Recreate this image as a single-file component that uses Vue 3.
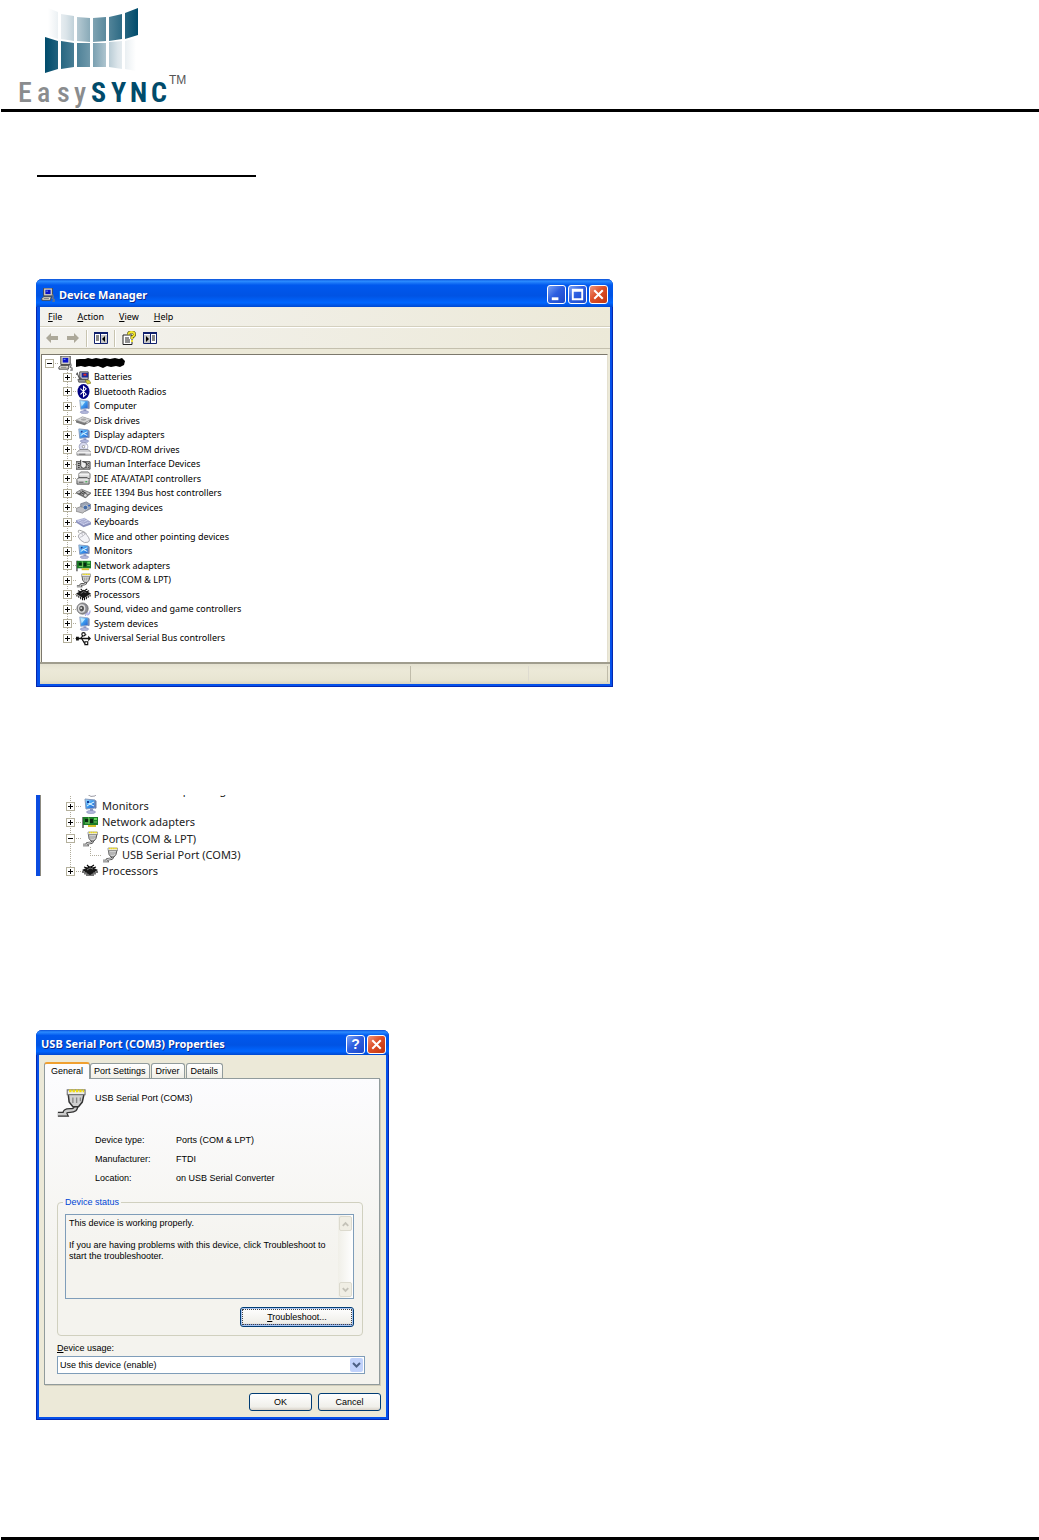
<!-- App.vue: driver installation page with the Device Manager and port properties windows -->
<template>
  <div class="page">
    <svg class="sprites" width="0" height="0" aria-hidden="true">
      <defs>
        <linearGradient id="screen" x1="0" y1="0" x2="1" y2="1">
          <stop offset="0" stop-color="#9fe0ff" />
          <stop offset="0.5" stop-color="#3c9cf0" />
          <stop offset="1" stop-color="#2457c8" />
        </linearGradient>
      </defs>
      <symbol id="i-pc" viewBox="0 0 16 16">
        <path d="M3 0h10v9H3z" fill="#d8d4c8" stroke="#404040" />
        <path d="M5 2h6v5H5z" fill="#0a12c8" />
        <path d="M6 3h2v1H6z" fill="#7fb4ff" />
        <path d="M1 12l2-2h9l-1 2v2H1z" fill="#e4e0d4" stroke="#404040" />
        <path d="M3 12h6" stroke="#777" />
        <path d="M13 7l1 3-1 2 2 1v2h-2" fill="none" stroke="#777" stroke-width="1.4" />
      </symbol>
      <symbol id="i-battery" viewBox="0 0 16 16">
        <path d="M4 2h9v8H4z" fill="#c8c8d0" stroke="#444" />
        <path d="M6 3h7v5H6z" fill="#1a2a9a" />
        <path d="M8 4h3v2H8z" fill="#e02828" />
        <path d="M1 3l4 9M0 5l2-2M4 8l5 5" stroke="#555" stroke-width="1.2" />
        <path d="M2 10h8l1 3H3z" fill="#999" stroke="#444" stroke-width=".8" />
        <path d="M10 11h4l2 3-4 1z" fill="#d8cf3a" stroke="#777018" stroke-width=".6" />
      </symbol>
      <symbol id="i-bluetooth" viewBox="0 0 16 16">
        <ellipse cx="8" cy="8" rx="6.4" ry="8" fill="#000080" />
        <path d="M4.7 5l6.2 5.8L8 13.5v-11L10.9 5.2 4.7 11" fill="none" stroke="#fff" stroke-width="1.1" />
      </symbol>
      <symbol id="i-monitor" viewBox="0 0 16 16">
        <path d="M4 1l9 1v8l-8 1z" fill="url(#screen)" stroke="#9cabc8" />
        <path d="M13 2l1.5 1v7L13 11z" fill="#6c7fa8" />
        <path d="M5 2.5l5 .5-4 5z" fill="#d5f4ff" opacity=".8" />
        <path d="M8 11h3v2H8z" fill="#8c94c0" />
        <ellipse cx="9" cy="14" rx="4.5" ry="1.5" fill="#b4b9dc" stroke="#7f86b4" stroke-width=".6" />
      </symbol>
      <symbol id="i-display" viewBox="0 0 16 16">
        <path d="M3 1l10 1v8l-9 1z" fill="url(#screen)" stroke="#8499bd" />
        <path d="M13 2l1.5 1v7L13 11z" fill="#6c7fa8" />
        <path d="M5 4l3 2 4-2M5 8l3-2 4 2" stroke="#e8fbff" fill="none" />
        <path d="M5 3h2v2H5z" fill="#123a9a" />
        <path d="M8 11h3v2H8z" fill="#8c94c0" />
        <ellipse cx="9" cy="14" rx="4.5" ry="1.5" fill="#b4b9dc" stroke="#7f86b4" stroke-width=".6" />
      </symbol>
      <symbol id="i-disk" viewBox="0 0 16 16">
        <path d="M0 8l7-4 9 3v2l-7 4-9-3z" fill="#777" />
        <path d="M0 7.5l7-3.5 9 3-7 3.5z" fill="#d8d8d8" stroke="#999" stroke-width=".6" />
        <ellipse cx="8" cy="7" rx="3" ry="1.2" fill="#a8a8a8" />
        <path d="M11 10.5l3-1.5" stroke="#eee" />
      </symbol>
      <symbol id="i-cdrom" viewBox="0 0 16 16">
        <circle cx="8" cy="5" r="4.6" fill="#d8daee" stroke="#8c90b0" stroke-width=".8" />
        <path d="M8 5l4-2v4z" fill="#fff" />
        <circle cx="8" cy="5" r="1.3" fill="#fff" stroke="#777" stroke-width=".7" />
        <path d="M1 11l3-3h9l3 3v3H1z" fill="#d0d0d4" stroke="#777" stroke-width=".8" />
        <path d="M1 11.5h15" stroke="#fff" />
        <path d="M3 13h7" stroke="#666" />
      </symbol>
      <symbol id="i-hid" viewBox="0 0 16 16">
        <path d="M0 5h15v8H0z" fill="#b8b8b8" stroke="#444" />
        <path d="M2 7h2M2 9h2M2 11h2M11 7h1M13 7h1M11 11h1M13 11h1" stroke="#222" />
        <path d="M5 3v6q0 3 3 3t3-3V6L7 5" fill="#eee" stroke="#333" />
        <path d="M10 6l4 4" stroke="#444" />
      </symbol>
      <symbol id="i-ide" viewBox="0 0 16 16">
        <path d="M3 3l2-2h8l2 2v5H3z" fill="#d8d8d8" stroke="#555" stroke-width=".8" />
        <path d="M3 4h11" stroke="#fff" />
        <path d="M1 9l2-2h9l2 2v5H1z" fill="#c8c8c8" stroke="#444" stroke-width=".9" />
        <path d="M1.5 9.5h12" stroke="#fff" />
        <path d="M3 12h5" stroke="#555" />
        <path d="M10 11h2v1h-2z" fill="#18a830" />
      </symbol>
      <symbol id="i-1394" viewBox="0 0 16 16">
        <path d="M0 8l6-4 10 4-6 5z" fill="#777" />
        <path d="M0 7l6-3.5 10 4-6 3.5z" fill="#c4c4c4" stroke="#555" stroke-width=".7" />
        <path d="M4 6l5 3M6 5l5 3M3 9l3-2" stroke="#444" stroke-width="1.1" />
        <circle cx="10" cy="10" r="2" fill="#ddd" stroke="#444" stroke-width=".7" />
      </symbol>
      <symbol id="i-imaging" viewBox="0 0 16 16">
        <path d="M5 4l6-2 5 3v4l-6 3-5-3z" fill="#9ca4b4" stroke="#666e80" stroke-width=".7" />
        <path d="M0 9l5-2 7 3-5 4-7-2z" fill="#c0c0c4" stroke="#777" stroke-width=".7" />
        <circle cx="10" cy="8" r="2.5" fill="#456da8" stroke="#ddd" stroke-width=".7" />
        <path d="M13 6h2" stroke="#2d62c0" stroke-width="1.5" />
      </symbol>
      <symbol id="i-keyboard" viewBox="0 0 16 16">
        <path d="M0 6l9-2 7 4v2l-8 3-8-5z" fill="#8b91bd" />
        <path d="M0 6l9-2.5L16 8l-8 3z" fill="#d4d8f2" stroke="#8b91bd" stroke-width=".6" />
        <path d="M3 6.5l7 3M5 5.7l7 3M7 5l7 3M3 7.5l8-3M6 9l8-2.5" stroke="#878cb8" stroke-width=".5" />
      </symbol>
      <symbol id="i-mouse" viewBox="0 0 16 16">
        <path d="M3 4Q1 0 6 2t5 3" fill="none" stroke="#999" />
        <path d="M3 6q5-5 9 1 4 5 1 7-4 2-8-2T3 6z" fill="#f4f4f8" stroke="#9a9aa2" stroke-width=".9" />
        <path d="M4 9q4-1 6-4M7 7L6 4" fill="none" stroke="#a8a8b0" stroke-width=".7" />
      </symbol>
      <symbol id="i-network" viewBox="0 0 16 16">
        <path d="M1 3v11" stroke="#555" stroke-width="1.5" />
        <path d="M1 3h15v8H1z" fill="#1c7c28" />
        <path d="M3 5h3v3H3zM8 5h3v4H8z" fill="#082c10" />
        <path d="M12 4h3v2h-3z" fill="#64d85c" />
        <path d="M6 4h1v6M12 8h3M3 9h4" stroke="#78c860" fill="none" />
        <path d="M6 11h8v2H6z" fill="#d4c02c" />
      </symbol>
      <symbol id="i-port" viewBox="0 0 16 16">
        <path d="M10.5 9.5Q11 12 7.5 12T5 14H1" fill="none" stroke="#333" stroke-width="2.6" />
        <path d="M10.5 9.5Q11 12 7.5 12T5 14H1" fill="none" stroke="#ccc" stroke-width="1.3" />
        <path d="M6.5 3H15l-1 4.5-2 2.5H9L7 7.5z" fill="#d0d0d0" stroke="#333" stroke-width=".8" />
        <path d="M6 1h9.5v2.5H6z" fill="#eee" stroke="#777" stroke-width=".6" />
        <path d="M7 1.5h8" stroke="#f0dc10" stroke-width="1.5" stroke-dasharray="1.3 .5" />
        <path d="M9 5v3M11 5v3M13 5v2" stroke="#888" stroke-width=".7" />
      </symbol>
      <symbol id="i-cpu" viewBox="0 0 16 16">
        <path d="M0 7l8-4 8 4-8 5z" fill="#181818" />
        <path d="M1 8v2M3 9v2.500M5 10v3M7 11v3M9 11v3M11 10v3M13 9v2.500M15 8v2M2 4l3 1M12 2l-3 2M5 2l2 2M14 4l-3 1" stroke="#000" stroke-width="1.1" />
        <path d="M5 7l3-2 3 1" fill="none" stroke="#888" stroke-width=".8" />
      </symbol>
      <symbol id="i-sound" viewBox="0 0 16 16">
        <ellipse cx="7" cy="7" rx="6" ry="6" fill="#8e8e94" stroke="#666" stroke-width=".8" />
        <ellipse cx="6" cy="7" rx="4" ry="4.5" fill="#ddd" />
        <ellipse cx="6" cy="7" rx="2.5" ry="3" fill="#555" />
        <circle cx="5.5" cy="6.5" r="1" fill="#eee" />
        <path d="M12 14q3-1 3-5M10 15q0-2 3-4" stroke="#a8a8e0" fill="none" stroke-width="1.2" />
      </symbol>
      <symbol id="i-usb" viewBox="0 0 16 16">
        <path d="M2 8h12" stroke="#111" stroke-width="1.6" />
        <path d="M0 6h3v4H0zM13 5l3 3-3 3z" fill="#111" />
        <path d="M5 8l3-4h3M6 8l3 5h2" fill="none" stroke="#111" stroke-width="1.3" />
        <circle cx="8" cy="3.5" r="1.8" fill="#fff" stroke="#111" stroke-width="1.2" />
        <path d="M9.5 11.5h3v3h-3z" fill="#fff" stroke="#111" stroke-width="1.2" />
      </symbol>
    </svg>

    <header class="brand">
      <svg class="logo" viewBox="0 0 190 109" width="190" height="109" role="img" aria-label="EasySYNC">
        <defs>
          <linearGradient id="top" gradientUnits="userSpaceOnUse" x1="48" x2="138" y1="0" y2="0">
            <stop offset="0" stop-color="#fff" />
            <stop offset=".2" stop-color="#dce5ea" />
            <stop offset=".5" stop-color="#7fa3b2" />
            <stop offset="1" stop-color="#004b6b" />
          </linearGradient>
          <linearGradient id="bottom" gradientUnits="userSpaceOnUse" x1="45" x2="136" y1="0" y2="0">
            <stop offset="0" stop-color="#004b6b" />
            <stop offset=".5" stop-color="#7099ab" />
            <stop offset=".8" stop-color="#dce5ea" />
            <stop offset="1" stop-color="#fff" />
          </linearGradient>
        </defs>
        <path fill="url(#top)" d="M48 8L58 12V39L48 36zM61 14L74 16V41L61 39zM77 17L90 18V42L77 41zM93 18L106 17V41L93 42zM109 17L122 14V39L109 41zM125 13L138 8V35L125 39z" />
        <path fill="url(#bottom)" d="M45 37L58 41V69L45 73zM61 41L74 43V67L61 69zM77 43L90 43V67L77 67zM93 43L106 43V67L93 67zM109 42L122 41V69L109 67zM125 41L136 38V71L125 69z" />
        <text class="easy" x="18 37 57 74" y="102">Easy</text>
        <text class="sync" x="91 111 130 151" y="102">SYNC</text>
        <text class="tm" x="169" y="84">TM</text>
      </svg>
    </header>

    <main class="content">
      <hr class="heading-rule" />

      <section class="window manager">
        <div class="titlebar">
          <svg class="title-icon"><use href="#i-pc" /></svg>
          <h2>Device Manager</h2>
          <button class="caption" type="button" aria-label="Minimize">
            <svg viewBox="0 0 18 18"><path d="M4 12h7v3H4z" fill="#fff" /></svg>
          </button>
          <button class="caption" type="button" aria-label="Maximize">
            <svg viewBox="0 0 18 18"><path d="M3 3h12v12H3zM5 6v7h8V6z" fill="#fff" fill-rule="evenodd" /></svg>
          </button>
          <button class="caption close" type="button" aria-label="Close">
            <svg viewBox="0 0 18 18"><path d="M4.5 4.5l9 9M13.5 4.5l-9 9" stroke="#fff" stroke-width="2.2" /></svg>
          </button>
        </div>
        <div class="manager-body">
          <nav class="menubar">
            <button v-for="item in menus" :key="item" type="button"><u>{{ item[0] }}</u>{{ item.slice(1) }}</button>
          </nav>
          <div class="toolbar">
            <button type="button" aria-label="Back" disabled>
              <svg viewBox="0 0 14 14"><path d="M1 7l5-5v3h7v4H6v3z" fill="#aca899" /></svg>
            </button>
            <button type="button" aria-label="Forward" disabled>
              <svg viewBox="0 0 14 14"><path d="M13 7L8 2v3H1v4h7v3z" fill="#aca899" /></svg>
            </button>
            <span class="divider"></span>
            <button type="button" aria-label="Show console tree">
              <svg viewBox="0 0 14 14">
                <path d="M.5 1.5h13v11H.5z" fill="#fff" stroke="#10206c" />
                <path d="M0 1h14v2H0zM6 3h1v10H6z" fill="#10206c" />
                <path d="M7 4h6v8H7z" fill="#c8c8c8" />
                <path d="M2 5h3M2 7h3M2 9h3" stroke="#111" />
                <path d="M11 5v6L8 8z" />
              </svg>
            </button>
            <span class="divider"></span>
            <button type="button" aria-label="Properties">
              <svg viewBox="0 0 14 14">
                <path d="M1 4h9v9.5H1z" fill="#fff" stroke="#222" />
                <path d="M3 7h4M3 9h5M3 11h5" stroke="#222" />
                <path d="M6.5 3.5q0-2.500 3-2.500t3 2.500q0 1.500-2.500 2.500v2" fill="none" stroke="#555008" stroke-width="3" />
                <path d="M6.5 3.5q0-2.500 3-2.500t3 2.500q0 1.500-2.500 2.500v2M10 9v2" fill="none" stroke="#f4e830" stroke-width="1.8" />
              </svg>
            </button>
            <button type="button" aria-label="Show action pane">
              <svg viewBox="0 0 14 14">
                <path d="M.5 1.5h13v11H.5z" fill="#fff" stroke="#10206c" />
                <path d="M0 1h14v2H0zM7 3h1v10H7z" fill="#10206c" />
                <path d="M1 4h6v8H1z" fill="#c8c8c8" />
                <path d="M9 5h3M9 7h3M9 9h3" stroke="#111" />
                <path d="M3 5v6l3-3z" />
              </svg>
            </button>
          </div>
          <div class="tree-pane">
            <div class="row root">
              <button class="expander open" type="button" aria-label="Collapse computer"></button>
              <span class="dots"></span>
              <svg class="icon"><use href="#i-pc" /></svg>
              <svg class="redacted" viewBox="0 0 50 10" aria-hidden="true">
                <path d="M4 1h5l3-1 4 1 4-1 5 1 4-1 5 1 5-1 4 1 3-1 3 3-1 4-4 2-4-1-5 1-4-1-4 2-5-2-4 1-5-1-4 1-4-1-5 1-4-3 1-4z" />
              </svg>
            </div>
            <ul class="tree">
              <li v-for="node in devices" :key="node.label" class="row">
                <button class="expander" type="button" :aria-label="'Expand ' + node.label"></button>
                <span class="dots"></span>
                <svg class="icon"><use :href="'#i-' + node.icon" /></svg>
                <span>{{ node.label }}</span>
              </li>
            </ul>
          </div>
          <div class="statusbar"><span></span><span></span><span></span></div>
        </div>
      </section>

      <section class="detail">
        <ul class="tree">
          <li v-for="node in ports" :key="node.label" class="row" :class="{ child: node.child }">
            <button
              v-if="!node.child"
              class="expander"
              :class="{ open: node.open }"
              type="button"
              :aria-label="'Toggle ' + node.label"
            ></button>
            <span class="dots"></span>
            <svg class="icon"><use :href="'#i-' + node.icon" /></svg>
            <span>{{ node.label }}</span>
          </li>
        </ul>
      </section>

      <section class="window properties">
        <div class="titlebar">
          <h2>USB Serial Port (COM3) Properties</h2>
          <button class="caption help" type="button" aria-label="Help">?</button>
          <button class="caption close" type="button" aria-label="Close">
            <svg viewBox="0 0 18 18"><path d="M4.5 4.5l9 9M13.5 4.5l-9 9" stroke="#fff" stroke-width="2.2" /></svg>
          </button>
        </div>
        <div class="dialog-body">
          <div class="tabs" role="tablist">
            <button
              v-for="tab in tabs"
              :key="tab"
              type="button"
              role="tab"
              :class="{ active: tab === activeTab }"
              :aria-selected="tab === activeTab"
              @click="activeTab = tab"
            >{{ tab }}</button>
          </div>
          <div class="panel">
            <div class="device">
              <svg class="device-icon"><use href="#i-port" /></svg>
              <span>USB Serial Port (COM3)</span>
            </div>
            <dl class="facts">
              <template v-for="fact in facts" :key="fact.name">
                <dt>{{ fact.name }}</dt>
                <dd>{{ fact.value }}</dd>
              </template>
            </dl>
            <fieldset class="status">
              <legend>Device status</legend>
              <div class="status-box">
                <textarea v-model="status" aria-label="Device status" readonly></textarea>
                <div class="scrollbar">
                  <button type="button" aria-label="Scroll up" disabled>
                    <svg viewBox="0 0 12 12"><path d="M3 8l3-3 3 3" /></svg>
                  </button>
                  <button type="button" aria-label="Scroll down" disabled>
                    <svg viewBox="0 0 12 12"><path d="M3 4l3 3 3-3" /></svg>
                  </button>
                </div>
              </div>
              <button class="push focused" type="button"><span><u>T</u>roubleshoot...</span></button>
            </fieldset>
            <label class="usage-label" for="usage"><u>D</u>evice usage:</label>
            <div class="select-box">
              <select id="usage" v-model="usage">
                <option value="enable">Use this device (enable)</option>
                <option value="disable">Do not use this device (disable)</option>
              </select>
              <svg class="arrow" viewBox="0 0 13 14" aria-hidden="true"><path d="M3 5l3.5 3.5L10 5" /></svg>
            </div>
          </div>
          <div class="actions">
            <button class="push" type="button">OK</button>
            <button class="push" type="button">Cancel</button>
          </div>
        </div>
      </section>
    </main>
    <footer class="page-end"></footer>
  </div>
</template>

<script setup>
import { ref } from 'vue';

const menus = ['File', 'Action', 'View', 'Help'];

const devices = [
  { label: 'Batteries', icon: 'battery' },
  { label: 'Bluetooth Radios', icon: 'bluetooth' },
  { label: 'Computer', icon: 'monitor' },
  { label: 'Disk drives', icon: 'disk' },
  { label: 'Display adapters', icon: 'display' },
  { label: 'DVD/CD-ROM drives', icon: 'cdrom' },
  { label: 'Human Interface Devices', icon: 'hid' },
  { label: 'IDE ATA/ATAPI controllers', icon: 'ide' },
  { label: 'IEEE 1394 Bus host controllers', icon: '1394' },
  { label: 'Imaging devices', icon: 'imaging' },
  { label: 'Keyboards', icon: 'keyboard' },
  { label: 'Mice and other pointing devices', icon: 'mouse' },
  { label: 'Monitors', icon: 'display' },
  { label: 'Network adapters', icon: 'network' },
  { label: 'Ports (COM & LPT)', icon: 'port' },
  { label: 'Processors', icon: 'cpu' },
  { label: 'Sound, video and game controllers', icon: 'sound' },
  { label: 'System devices', icon: 'monitor' },
  { label: 'Universal Serial Bus controllers', icon: 'usb' }
];

const ports = [
  { label: 'Mice and other pointing devices', icon: 'mouse' },
  { label: 'Monitors', icon: 'display' },
  { label: 'Network adapters', icon: 'network' },
  { label: 'Ports (COM & LPT)', icon: 'port', open: true },
  { label: 'USB Serial Port (COM3)', icon: 'port', child: true },
  { label: 'Processors', icon: 'cpu' }
];

const tabs = ['General', 'Port Settings', 'Driver', 'Details'];
const activeTab = ref('General');

const facts = [
  { name: 'Device type:', value: 'Ports (COM & LPT)' },
  { name: 'Manufacturer:', value: 'FTDI' },
  { name: 'Location:', value: 'on USB Serial Converter' }
];

const status = ref(
  'This device is working properly.\n\nIf you are having problems with this device, click Troubleshoot to start the troubleshooter.'
);
const usage = ref('enable');
</script>

<style>
body { margin: 0; background: #fff; }
</style>

<style scoped>
.page {
  min-height: 100vh;
  box-sizing: border-box;
  display: flex;
  flex-direction: column;
  padding-left: 1px;
  color: #000;
  font-family: 'Noto Sans', 'Open Sans', sans-serif;
  font-size: 9px;
}

.sprites { position: absolute; }

button, select, textarea { font: inherit; color: inherit; margin: 0; padding: 0; }
button { border: none; background: none; }
h2 { margin: 0; }

.brand { border-bottom: 3px solid #000; }
.logo { display: block; margin-left: -1px; }
.easy, .sync { font-family: 'Roboto Condensed', Roboto, sans-serif; font-size: 28px; }
.easy { fill: #8a8c8e; font-weight: 500; }
.sync { fill: #004b6b; font-weight: 700; }
.tm { font-family: 'Liberation Sans', sans-serif; font-size: 12px; fill: #555; }

.content { flex: 1; padding: 0 35px; }
.heading-rule {
  width: 219px;
  height: 2px;
  margin: 63px 0 102px 1px;
  border: none;
  background: #000;
}

.window {
  box-sizing: border-box;
  width: 100%;
  padding: 0 2px 2px;
  border: 1px solid #0528b0;
  border-top: none;
  border-radius: 6px 6px 0 0;
  background: #0450ea;
}
.manager { max-width: 577px; padding-left: 3px; }
.manager-body { background: #ece9d8; }
.properties { max-width: 353px; margin-top: 154px; }

.titlebar {
  box-sizing: border-box;
  height: 28px;
  margin: 0 -3px;
  padding: 3px 5px 0;
  display: flex;
  align-items: center;
  gap: 2px;
  border-radius: 6px 6px 0 0;
  background: linear-gradient(#0b50d8, #2b8bff 8%, #0058ee 22%, #0053e4 60%, #0066ff 85%, #0048d0);
  color: #fff;
}
.manager .titlebar { margin-left: -4px; }
.titlebar h2 {
  flex: 1;
  font-size: 11px;
  line-height: 14px;
  text-shadow: 1px 1px #0a2a90;
}
.title-icon { width: 14px; height: 14px; margin-right: 2px; }
.caption {
  box-sizing: border-box;
  width: 19px;
  height: 19px;
  border: 1px solid #fff;
  border-radius: 3px;
  background: linear-gradient(135deg, #7ba2f4, #2d5fe0 45%, #1d48c8);
}
.caption svg { display: block; width: 17px; height: 17px; }
.caption.close { background: linear-gradient(135deg, #f0957c, #dd4f27 45%, #c0350f); }

.menubar {
  height: 19px;
  padding: 0 8px;
  display: flex;
  align-items: center;
  gap: 15px;
  background: linear-gradient(100deg, #f3f2ee, #ece9d8);
  border-bottom: 1px solid #d4d0bf;
}
.menubar button { line-height: 12px; }

.toolbar {
  height: 20px;
  padding: 0 5px;
  display: flex;
  align-items: center;
  gap: 7px;
  background: linear-gradient(100deg, #f3f2ee, #ece9d8);
  border-top: 1px solid #fff;
  border-bottom: 1px solid #c4c0ae;
}
.toolbar button { width: 14px; height: 14px; }
.toolbar svg { display: block; width: 14px; height: 14px; }
.divider { width: 1px; height: 17px; background: #c8c4b0; border-right: 1px solid #fff; margin: 0 -1px; }

.tree-pane {
  margin: 0 2px 0 1px;
  padding: 1px 0 17px;
  border: solid #7c786c;
  border-width: 1px 1px 0 1px;
  border-right-color: #e4e0d0;
  background: #fff;
}
.toolbar + .tree-pane { margin-top: 5px; }

.tree { list-style: none; margin: 0; padding: 0; }
.row {
  min-height: 14px;
  display: flex;
  align-items: center;
  line-height: 14px;
  white-space: nowrap;
}
.row:nth-child(even) { min-height: 15px; }
.manager .tree {
  background: repeating-linear-gradient(#b0ac9c 0 1px, transparent 1px 2px) 25px 0 / 1px calc(100% - 8px) no-repeat;
}
.manager .tree .row { padding-left: 21px; }
.root { padding-left: 3px; }
.expander {
  flex: none;
  box-sizing: border-box;
  width: 9px;
  height: 9px;
  border: 1px solid #b4b09c;
  background:
    linear-gradient(#000, #000) center / 5px 1px no-repeat,
    linear-gradient(#000, #000) center / 1px 5px no-repeat,
    #fff;
}
.expander.open { background: linear-gradient(#000, #000) center / 5px 1px no-repeat, #fff; }
.dots { flex: none; width: 4px; height: 1px; background: repeating-linear-gradient(90deg, transparent 0 1px, #b0ac9c 1px 2px); }
.icon { flex: none; width: 15px; height: 15px; margin: -1px 3px -1px 0; }
.redacted { width: 50px; height: 10px; }

.statusbar {
  height: 20px;
  display: grid;
  grid-template-columns: 371px 120px 1fr;
  border-top: 2px solid #a09d8e;
  background: linear-gradient(#e4e1d0, #ece9d8 30%, #e8e5d2 80%, #d8d4c0);
}
.statusbar span { margin: 2px 2px 2px 0; border-right: 1px solid #c0bcaa; }
.statusbar span:nth-child(2) { border-color: #dedbd0; }
.statusbar span:first-child { margin-right: 0; }

.detail {
  max-width: 210px;
  height: 81px;
  margin-top: 108px;
  overflow: hidden;
  box-sizing: border-box;
  padding-left: 1px;
  border-left: 4px solid #0a4ce0;
  box-shadow: inset 1px 0 #8c8a80;
  color: #222;
  font-size: 11px;
}
.detail .tree {
  margin: -13px 0 0;
  background: repeating-linear-gradient(#b0ac9c 0 1px, transparent 1px 2px) 29px 0 / 1px 100% no-repeat;
}
.detail .row { min-height: 16px; padding-left: 25px; line-height: 16px; }
.detail .row:nth-child(4) { min-height: 17px; }
.detail .dots { width: 7px; }
.detail .icon { width: 16px; height: 16px; margin-right: 4px; }
.detail .row.child { padding-left: 49px; }
.detail .child .dots {
  width: 12px;
  height: 9px;
  align-self: flex-start;
  background:
    repeating-linear-gradient(#b0ac9c 0 1px, transparent 1px 2px) left / 1px 100% no-repeat,
    repeating-linear-gradient(90deg, #b0ac9c 0 1px, transparent 1px 2px) bottom / 100% 1px no-repeat;
}

.properties, .properties button { font-family: 'Liberation Sans', sans-serif; }
.properties .titlebar { height: 25px; padding: 3px 3px 0 5px; }
.properties h2 { font-family: 'Noto Sans', 'Open Sans', sans-serif; }
.properties .help { font-size: 14px; font-weight: 700; line-height: 16px; }
.dialog-body { padding: 7px 6px 6px 5px; background: #ece9d8; }

.tabs { display: flex; align-items: flex-end; gap: 1px; }
.tabs button {
  height: 15px;
  padding: 0 3px;
  border: 1px solid #919b9c;
  border-bottom: none;
  border-radius: 3px 3px 0 0;
  background: linear-gradient(#fff, #f0eee6);
  line-height: 15px;
}
.tabs button:nth-child(n + 3) { padding: 0 4px; }
.tabs .active {
  height: 17px;
  margin: 0 -1px -1px 0;
  padding: 0 6px;
  border-top: 2px solid #f0a030;
  background: #fcfcfe;
  line-height: 13px;
}

.panel {
  padding: 9px 16px 10px 12px;
  border: 1px solid #919b9c;
  box-shadow: 1px 1px #d0ccba;
  background: linear-gradient(#fcfcfe, #f4f3ee 60%);
}
.device { display: flex; align-items: flex-start; gap: 9px; line-height: 20px; }
.device-icon { width: 30px; height: 30px; margin-left: -1px; }
.facts {
  margin: 13px 0 8px 38px;
  display: grid;
  grid-template-columns: 81px 1fr;
  line-height: 19px;
}
.facts dd { margin: 0; }

.status {
  min-width: 0;
  margin: 0;
  padding: 6px 8px 8px 7px;
  border: 1px solid #d0d0bf;
  border-radius: 4px;
  display: flex;
  flex-direction: column;
  align-items: flex-end;
}
.status legend { padding: 0 2px; margin-left: -2px; color: #0046d5; line-height: 12px; }
.status-box {
  box-sizing: border-box;
  width: 100%;
  height: 85px;
  display: flex;
  border: 1px solid #7f9db9;
}
.status textarea {
  flex: 1;
  min-width: 0;
  padding: 3px;
  border: none;
  background: transparent;
  overflow: hidden;
  resize: none;
  font-family: 'Liberation Sans', sans-serif;
  line-height: 11px;
}
.scrollbar {
  width: 15px;
  display: flex;
  flex-direction: column;
  justify-content: space-between;
  background: linear-gradient(90deg, #f0efe8, #fff);
}
.scrollbar button {
  height: 15px;
  margin: 1px;
  border: 1px solid #dcdace;
  border-radius: 2px;
  background: #f0eee4;
}
.scrollbar svg { display: block; width: 11px; height: 12px; }
.scrollbar path, .arrow path { fill: none; stroke: #c4c2b8; stroke-width: 2; }

.push {
  box-sizing: border-box;
  min-width: 63px;
  height: 18px;
  border: 1px solid #003c74;
  border-radius: 3px;
  background: linear-gradient(#fff, #f0efea 80%, #d8d2c8);
}
.push.focused {
  width: 114px;
  height: 20px;
  margin-top: 8px;
  padding: 1px;
  box-shadow: inset 0 0 0 1px #a8c4f0, inset 0 -2px #7e9ee0;
}
.push.focused span { display: block; border: 1px dotted #444; line-height: 14px; }

.usage-label { display: block; margin-top: 7px; line-height: 11px; }
.select-box {
  display: flex;
  height: 16px;
  margin-top: 2px;
  margin-right: -2px;
  border: 1px solid #7f9db9;
  background: #fff;
}
.select-box select {
  flex: 1;
  padding: 0 2px;
  border: none;
  background: transparent;
  appearance: none;
  font-family: 'Liberation Sans', sans-serif;
}
.arrow { width: 13px; margin: 1px; border-radius: 2px; background: #c1d2fb; pointer-events: none; }
.arrow path { stroke: #4d6185; }

.actions { display: flex; justify-content: flex-end; gap: 6px; margin: 8px -1px 0 0; }

.page-end { border-bottom: 3px solid #000; }
</style>
